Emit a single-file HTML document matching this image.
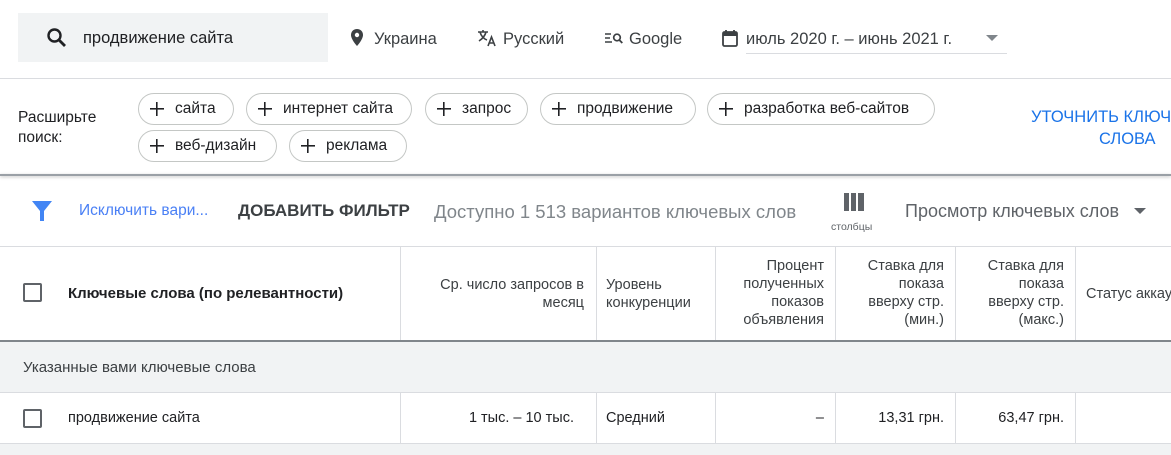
<!DOCTYPE html>
<html><head><meta charset="utf-8"><style>
*{box-sizing:border-box;margin:0;padding:0}
body{width:1171px;height:455px;overflow:hidden;background:#fff;font-family:"Liberation Sans",Arial,sans-serif;color:#202124;position:relative}
.a{position:absolute;white-space:nowrap}
.chip{position:absolute;height:32px;border:1px solid #c4c7c5;border-radius:16px;font-size:15.5px;line-height:30px;padding-left:36px;color:#202124;white-space:nowrap}
.chip:before{content:"";position:absolute;left:11px;top:8px;width:14px;height:14px;background:linear-gradient(#202124,#202124) center/14px 1.6px no-repeat,linear-gradient(#202124,#202124) center/1.6px 14px no-repeat}
.vl{position:absolute;width:1px;background:#dadce0}
.hl{position:absolute;left:0;width:1171px;height:1px;background:#dadce0}
.th{position:absolute;font-size:14.5px;color:#3c4043;line-height:18px;text-align:right;white-space:nowrap}
.cb{position:absolute;left:23px;width:19px;height:19px;border:2px solid #5f6368;border-radius:2px}
.td{position:absolute;font-size:14.5px;color:#202124;white-space:nowrap}
</style></head><body>
<div class="a" style="left:18px;top:13px;width:310px;height:49px;background:#f1f3f4"></div>
<svg class="a" style="left:45px;top:26px" width="24" height="24" viewBox="0 0 24 24"><circle cx="9.5" cy="9.5" r="6" fill="none" stroke="#202124" stroke-width="2.4"/><path d="M14 14l6 6" stroke="#202124" stroke-width="2.8"/></svg>
<div class="a" style="left:83px;top:29px;font-size:16.5px">продвижение сайта</div>
<svg class="a" style="left:350px;top:29px" width="14" height="18" viewBox="0 0 14 18"><path d="M7 0C3.4 0 1 2.6 1 6c0 4.5 6 11 6 11s6-6.5 6-11c0-3.4-2.4-6-6-6z" fill="#3c4043"/><circle cx="7" cy="6" r="2.2" fill="#fff"/></svg>
<div class="a" style="left:374px;top:30px;font-size:16.5px;color:#3c4043">Украина</div>
<svg class="a" style="left:477px;top:29px" width="20" height="18" viewBox="0 0 20 18"><path d="M1 3h10M6 1v2M3 3c1 4 4 7 7 8M9 3c-1 4-4 7-7 9" stroke="#3c4043" stroke-width="1.6" fill="none"/><path d="M11 17l3.5-9 3.5 9M12 14h5" stroke="#3c4043" stroke-width="1.6" fill="none"/></svg>
<div class="a" style="left:503px;top:30px;font-size:16.5px;color:#3c4043">Русский</div>
<svg class="a" style="left:604px;top:31px" width="20" height="14" viewBox="0 0 20 14"><path d="M1 3h6M1 7h5M1 11h7" stroke="#3c4043" stroke-width="1.6"/><circle cx="13" cy="6.5" r="3.3" fill="none" stroke="#3c4043" stroke-width="1.7"/><path d="M15.3 9l3 3" stroke="#3c4043" stroke-width="1.8"/></svg>
<div class="a" style="left:629px;top:30px;font-size:16.5px;color:#3c4043">Google</div>
<svg class="a" style="left:722px;top:29px" width="16" height="18" viewBox="0 0 16 18"><rect x="1" y="3" width="14" height="14" rx="1.5" fill="none" stroke="#3c4043" stroke-width="1.8"/><rect x="1" y="3" width="14" height="4" fill="#3c4043"/><path d="M4 1v3M12 1v3" stroke="#3c4043" stroke-width="1.8"/></svg>
<div class="a" style="left:746px;top:30px;font-size:16.5px;color:#3c4043">июль 2020 г. – июнь 2021 г.</div>
<div class="a" style="left:986px;top:35px;border:6px solid transparent;border-top:6px solid #80868b;border-bottom:0"></div>
<div class="a" style="left:746px;top:53px;width:261px;height:1px;background:#dadce0"></div>
<div class="hl" style="top:78px"></div>
<div class="a" style="left:18px;top:108px;font-size:15.5px;line-height:20px">Расширьте<br>поиск:</div>
<div class="chip" style="left:138px;top:93px;width:96px">сайта</div>
<div class="chip" style="left:246px;top:93px;width:166px">интернет сайта</div>
<div class="chip" style="left:425px;top:93px;width:103px">запрос</div>
<div class="chip" style="left:540px;top:93px;width:156px">продвижение</div>
<div class="chip" style="left:707px;top:93px;width:228px">разработка веб-сайтов</div>
<div class="chip" style="left:138px;top:130px;width:139px">веб-дизайн</div>
<div class="chip" style="left:289px;top:130px;width:118px">реклама</div>
<div class="a" style="left:1031px;top:106px;font-size:16.5px;color:#1a73e8;line-height:22px">УТОЧНИТЬ КЛЮЧ</div>
<div class="a" style="left:1099px;top:128px;font-size:16.5px;color:#1a73e8;line-height:22px">СЛОВА</div>
<div class="a" style="left:0;top:174px;width:1171px;height:2px;background:#9aa0a6;box-shadow:0 1px 3px rgba(0,0,0,.25)"></div>
<svg class="a" style="left:32px;top:201px" width="20" height="20" viewBox="0 0 20 20"><path d="M0 0h20L12 10v10h-4V10z" fill="#4285f4"/></svg>
<div class="a" style="left:79px;top:202px;font-size:15.5px;color:#4a80f5">Исключить вари...</div>
<div class="a" style="left:238px;top:201px;font-size:17px;color:#3c4043;font-weight:bold">ДОБАВИТЬ ФИЛЬТР</div>
<div class="a" style="left:434px;top:201px;font-size:18.5px;color:#80868b">Доступно 1 513 вариантов ключевых слов</div>
<div class="a" style="left:844px;top:193px;width:5px;height:18px;background:#5f6368"></div>
<div class="a" style="left:851px;top:193px;width:5px;height:18px;background:#5f6368"></div>
<div class="a" style="left:858px;top:193px;width:6px;height:18px;background:#5f6368"></div>
<div class="a" style="left:831px;top:221px;font-size:10.5px;color:#5f6368">столбцы</div>
<div class="a" style="left:905px;top:201px;font-size:18px;color:#5f6368">Просмотр ключевых слов</div>
<div class="a" style="left:1134px;top:208px;border:6px solid transparent;border-top:6px solid #5f6368;border-bottom:0"></div>
<div class="hl" style="top:246px"></div>
<div class="cb" style="top:283px"></div>
<div class="a" style="left:68px;top:285px;font-size:15px;font-weight:bold;color:#202124">Ключевые слова (по релевантности)</div>
<div class="vl" style="left:400px;top:247px;height:93px"></div>
<div class="vl" style="left:596px;top:247px;height:93px"></div>
<div class="vl" style="left:715px;top:247px;height:93px"></div>
<div class="vl" style="left:835px;top:247px;height:93px"></div>
<div class="vl" style="left:955px;top:247px;height:93px"></div>
<div class="vl" style="left:1075px;top:247px;height:93px"></div>
<div class="th" style="right:587px;top:276px">Ср. число запросов в<br>месяц</div>
<div class="th" style="left:606px;top:276px;text-align:left">Уровень<br>конкуренции</div>
<div class="th" style="right:347px;top:257px">Процент<br>полученных<br>показов<br>объявления</div>
<div class="th" style="right:227px;top:257px">Ставка для<br>показа<br>вверху стр.<br>(мин.)</div>
<div class="th" style="right:107px;top:257px">Ставка для<br>показа<br>вверху стр.<br>(макс.)</div>
<div class="th" style="left:1086px;top:285px;text-align:left">Статус аккаунта</div>
<div class="a" style="left:0;top:340px;width:1171px;height:2px;background:#80868b"></div>
<div class="a" style="left:0;top:342px;width:1171px;height:50px;background:#f1f3f4"></div>
<div class="a" style="left:23px;top:359px;font-size:15px;color:#3c4043">Указанные вами ключевые слова</div>
<div class="hl" style="top:392px"></div>
<div class="vl" style="left:400px;top:393px;height:50px"></div>
<div class="vl" style="left:596px;top:393px;height:50px"></div>
<div class="vl" style="left:715px;top:393px;height:50px"></div>
<div class="vl" style="left:835px;top:393px;height:50px"></div>
<div class="vl" style="left:955px;top:393px;height:50px"></div>
<div class="vl" style="left:1075px;top:393px;height:50px"></div>
<div class="cb" style="top:409px"></div>
<div class="td" style="left:68px;top:410px">продвижение сайта</div>
<div class="td" style="right:597px;top:410px">1 тыс. – 10 тыс.</div>
<div class="td" style="left:606px;top:410px">Средний</div>
<div class="td" style="right:347px;top:410px">–</div>
<div class="td" style="right:227px;top:410px">13,31 грн.</div>
<div class="td" style="right:107px;top:410px">63,47 грн.</div>
<div class="hl" style="top:443px"></div>
<div class="a" style="left:0;top:444px;width:1171px;height:11px;background:#f1f3f4"></div>
</body></html>
